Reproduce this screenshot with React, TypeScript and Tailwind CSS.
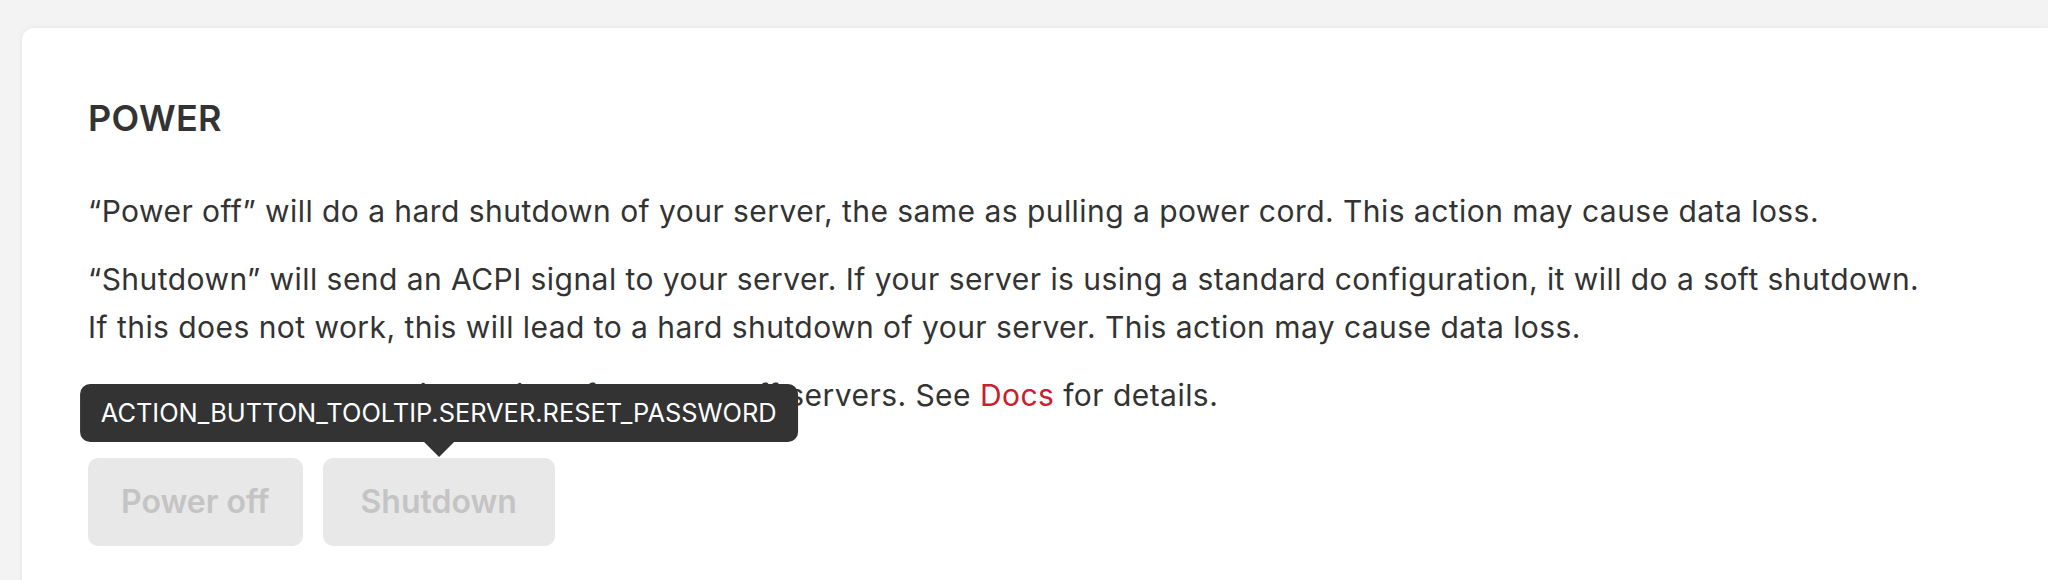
import * as React from "react"

const buttonClass =
  "h-[88px] rounded-[10px] bg-[#e8e8e8] text-[#c4c4c4] text-[32px] font-semibold cursor-not-allowed"

export default function App() {
  return (
    <div className="min-h-[580px] bg-[#f3f3f3] pl-[22px] pt-[28px] overflow-hidden font-['Inter',sans-serif] text-[#333333]">
      <div className="bg-white rounded-tl-[12px] shadow-[0_0_5px_rgba(0,0,0,0.07)] pl-[66px] pt-[68px] pb-[60px] min-h-[560px]">
        <h2 className="text-[36px] leading-[44px] font-semibold tracking-[0.3px] text-[#333333]">POWER</h2>

        <div className="mt-[47px] text-[30px] leading-[48px] tracking-[0.45px]">
          <p className="mb-[20px]">
            “Power off” will do a hard shutdown of your server, the same as pulling a power cord. This action may cause data loss.
          </p>
          <p className="mb-[20px]">
            “Shutdown” will send an ACPI signal to your server. If your server is using a standard configuration, it will do a soft shutdown.
            <br />
            If this does not work, this will lead to a hard shutdown of your server. This action may cause data loss.
          </p>
          <p>
            Please note that you will be billed for turned off servers. See{" "}
            <a href="#" className="text-[#c8202c]">Docs</a> for details.
          </p>
        </div>

        <div className="mt-[39px] flex gap-[20px]">
          <button className={`${buttonClass} px-[33px]`}>Power off</button>
          <div className="relative">
            <button className={`${buttonClass} px-[38px]`}>Shutdown</button>
            <div className="absolute bottom-full left-1/2 -translate-x-1/2 mb-[16px] whitespace-nowrap rounded-[10px] bg-[#333333] px-[21px] py-[12px] text-[25.4px] leading-[34px] text-white">
              ACTION_BUTTON_TOOLTIP.SERVER.RESET_PASSWORD
              <span className="absolute left-1/2 top-full -translate-x-1/2 border-x-[15px] border-t-[15px] border-x-transparent border-t-[#333333]" />
            </div>
          </div>
        </div>
      </div>
    </div>
  )
}
